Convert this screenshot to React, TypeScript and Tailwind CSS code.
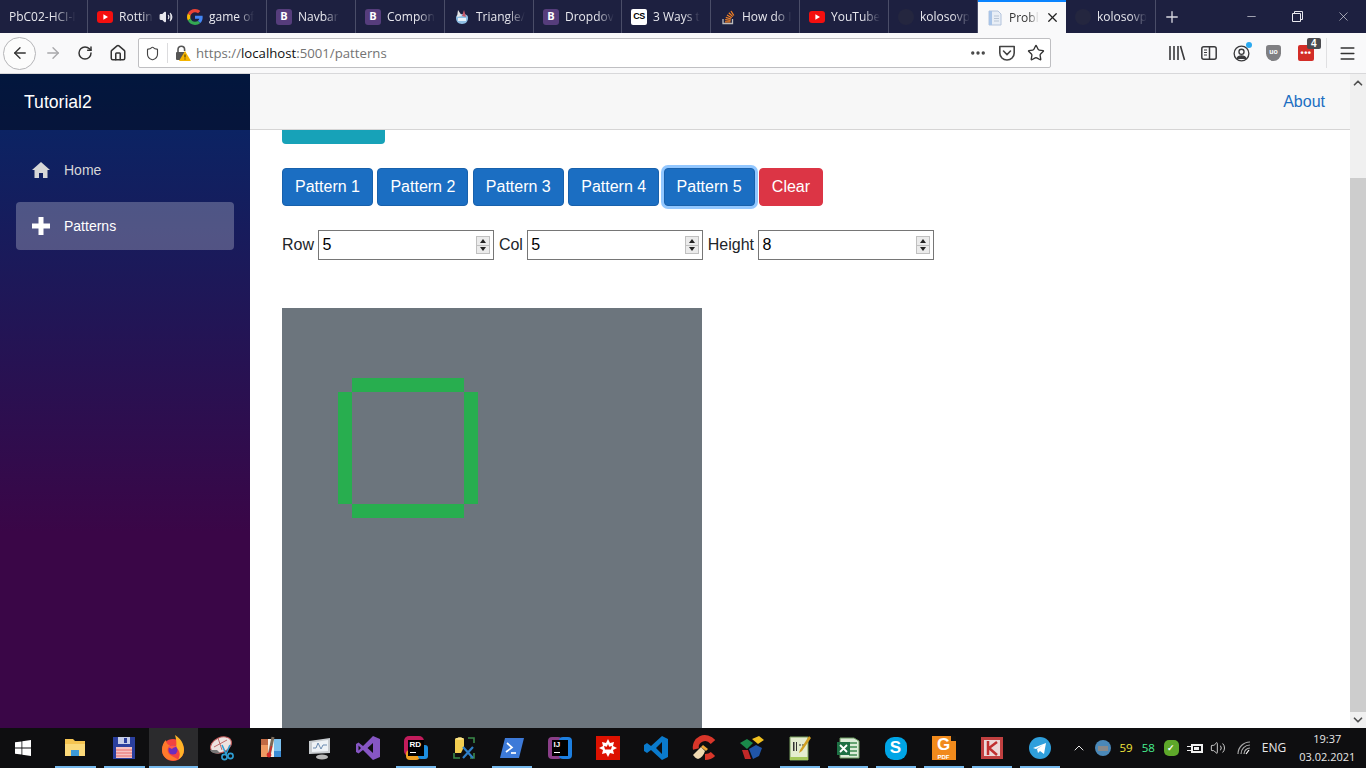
import type { ReactNode } from "react";
import { ArrowLeft, ArrowRight, ChevronUp, Ellipsis, Home, Menu, Minus, Plus, RotateCw, Shield, Star, Volume2, X } from "lucide-react";

// --- tab icons ---
const YouTubeIcon = () => (
  <svg width="16" height="16" viewBox="0 0 16 16">
    <rect x="0" y="2" width="16" height="12" rx="3" fill="#f40f0f" />
    <path d="M6.400 5.200 11 8l-4.600 2.800z" fill="#fff" />
  </svg>
);

const GoogleIcon = () => (
  <svg width="16" height="16" viewBox="0 0 48 48">
    <path fill="#ea4335" d="M24 9.500c3.500 0 6.700 1.200 9.200 3.600l6.900-6.900C35.900 2.400 30.500 0 24 0 14.600 0 6.500 5.400 2.600 13.200l8 6.200C12.500 13.600 17.800 9.500 24 9.500z" />
    <path fill="#4285f4" d="M47 24.500c0-1.600-.1-3.100-.4-4.500H24v9h13c-.6 3-2.200 5.500-4.800 7.200l7.700 6C44.400 38 47 31.800 47 24.500z" />
    <path fill="#fbbc05" d="M10.600 28.600C10.100 27.200 9.800 25.600 9.800 24s.3-3.200.8-4.600l-8-6.200C.9 16.500 0 20.100 0 24s.9 7.500 2.600 10.800z" />
    <path fill="#34a853" d="M24 48c6.500 0 11.900-2.100 15.900-5.800l-7.700-6c-2.100 1.500-4.900 2.300-8.200 2.300-6.200 0-11.500-4.100-13.400-9.900l-8 6.200C6.500 42.600 14.600 48 24 48z" />
  </svg>
);

const BootstrapIcon = () => (
  <span className="flex h-4 w-4 items-center justify-center rounded-[3px] bg-[#563d7c] text-[11px] font-bold text-white">B</span>
);

const TriangleIcon = () => (
  <svg width="16" height="16" viewBox="0 0 16 16">
    <path d="M2 9c0-3 2-4 6-4s6 1 6 4-2 6-6 6-6-3-6-6z" fill="#8fbfe4" />
    <path d="M4 1 8 7 3 8z" fill="#e4e4e4" />
    <path d="M10 1 8 7l4 1z" fill="#c85a6a" />
    <path d="M4 9h8v3H4z" fill="#e8f2fa" />
  </svg>
);

const CsIcon = () => (
  <span className="flex h-4 w-4 items-center justify-center rounded-[2px] bg-white font-['Liberation_Sans',sans-serif] text-[9px] font-bold tracking-[-0.5px] text-black">CS</span>
);

const StackIcon = () => (
  <svg width="16" height="16" viewBox="0 0 16 16" fill="none">
    <path d="M3 10v4.500h9.500V10" stroke="#bcbbbb" strokeWidth="1.300" />
    <path d="M5 12.800h5.500M5.200 10.700l5.400.7M5.800 8.300l5.200 1.700M7 6l4.700 2.800M8.800 3.800l4 3.800M11 2l2.800 4.500" stroke="#f48024" strokeWidth="1.300" />
  </svg>
);

const GithubDim = () => <span className="h-4 w-4 rounded-full bg-[#24263f]" />;

const DocIcon = () => (
  <svg width="16" height="16" viewBox="0 0 16 16">
    <path d="M2 1h9l3 3v11H2z" fill="#e8eef6" stroke="#b4c4dc" />
    <path d="M2 1h3v14H2z" fill="#a8c4e8" />
    <path d="M7 6h5M7 8.500h5M7 11h5" stroke="#b8c4d4" />
  </svg>
);

const tabs: { title: string; icon?: ReactNode; w: number; active?: boolean; sound?: boolean }[] = [
  { title: "PbC02-HCI-I", w: 88 },
  { title: "Rottin", icon: <YouTubeIcon />, w: 90, sound: true },
  { title: "game of", icon: <GoogleIcon />, w: 89 },
  { title: "Navbar", icon: <BootstrapIcon />, w: 89 },
  { title: "Compon", icon: <BootstrapIcon />, w: 89 },
  { title: "Triangle/", icon: <TriangleIcon />, w: 89 },
  { title: "Dropdov", icon: <BootstrapIcon />, w: 88 },
  { title: "3 Ways t", icon: <CsIcon />, w: 89 },
  { title: "How do I", icon: <StackIcon />, w: 89 },
  { title: "YouTube", icon: <YouTubeIcon />, w: 89 },
  { title: "kolosovp", icon: <GithubDim />, w: 89 },
  { title: "Probl", icon: <DocIcon />, w: 88, active: true },
  { title: "kolosovp", icon: <GithubDim />, w: 90 },
];

function Tab({ tab }: { tab: (typeof tabs)[number] }) {
  return (
    <div
      style={{ width: tab.w }}
      className={
        tab.active
          ? "flex h-[33px] shrink-0 items-center gap-[6px] border-t-2 border-[#0a84ff] bg-[#f9f9fa] pl-[9px] pr-[9px] text-[#333]"
          : "flex h-[33px] shrink-0 items-center gap-[6px] border-r border-[#4a4d68] pl-[9px] pr-[8px] text-[#e8e8ee]"
      }
    >
      {tab.icon && <span className="flex w-4 shrink-0 items-center justify-center">{tab.icon}</span>}
      <span className="whitespace-nowrap [mask-image:linear-gradient(to_right,black_65%,transparent)]">{tab.title}</span>
      {tab.sound && <Volume2 size={14} className="ml-auto mr-[2px] shrink-0 text-[#e8e8ee]" fill="currentColor" />}
      {tab.active && <X size={15} strokeWidth={2} className="ml-auto shrink-0 text-[#222]" />}
    </div>
  );
}

function TabBar() {
  return (
    <div className="flex h-[33px] shrink-0 items-center bg-[#1d2040] font-['Open_Sans',sans-serif] text-[12px]">
      {tabs.map((t, i) => (
        <Tab key={i} tab={t} />
      ))}
      <Plus size={18} strokeWidth={1.800} className="ml-[7px] text-[#d8d8e0]" />
      <div className="ml-auto flex h-full items-center text-[#e8e8ee]">
        <span className="flex w-[46px] justify-center"><Minus size={13} strokeWidth={1.200} /></span>
        <span className="flex w-[46px] justify-center">
          <svg width="11" height="11" viewBox="0 0 11 11" fill="none" stroke="currentColor"><path d="M.5 2.500h8v8h-8zM2.500 2.500v-2h8v8h-2" /></svg>
        </span>
        <span className="flex w-[46px] justify-center"><X size={15} strokeWidth={1} /></span>
      </div>
    </div>
  );
}

// --- toolbar ---
const LibraryIcon = () => (
  <svg width="18" height="16" viewBox="0 0 18 16" fill="none" stroke="#3a3a3c" strokeWidth="1.600">
    <path d="M2 1v14M6 1v14M10 1v14M12.500 1l4 14" />
  </svg>
);

const SidebarIcon = () => (
  <svg width="16" height="14" viewBox="0 0 16 14" fill="none" stroke="#3a3a3c" strokeWidth="1.500">
    <rect x=".8" y=".8" width="14.400" height="12.400" rx="2" />
    <path d="M8.500 1v12" />
    <path d="M3 4h3M3 6.500h3M3 9h3" strokeWidth="1.100" />
  </svg>
);

const PocketIcon = () => (
  <svg width="18" height="16" viewBox="0 0 18 16" fill="none" stroke="#444" strokeWidth="1.600">
    <path d="M1.800 1.500h14.400v6.500a7.200 7 0 0 1-14.400 0z" strokeLinejoin="round" />
    <path d="M5.500 6 9 9.500 12.500 6" strokeLinecap="round" />
  </svg>
);

const LockWarnIcon = () => (
  <svg width="16" height="18" viewBox="0 0 16 18">
    <path d="M3 9V5.500a3.300 3.300 0 0 1 6.600 0V7" fill="none" stroke="#555" strokeWidth="1.600" />
    <rect x="1" y="8" width="10" height="8" rx="1" fill="#555" />
    <path d="M10 7 16 17H4z" fill="#f5b400" />
    <path d="M10 10.500v3M10 14.500v1" stroke="#3a2a00" strokeWidth="1" />
  </svg>
);

const AccountIcon = () => (
  <span className="relative flex">
    <svg width="17" height="17" viewBox="0 0 18 18" fill="none" stroke="#3a3a3c" strokeWidth="1.400">
      <circle cx="9" cy="9" r="7.800" />
      <circle cx="9" cy="7.200" r="2.700" />
      <path d="M4.500 14c1.200-3.200 7.800-3.200 9 0z" fill="#3a3a3c" />
    </svg>
    <span className="absolute right-[-2px] top-[-3px] h-[6px] w-[6px] rounded-full bg-[#2aa9f0]" />
  </span>
);

const UblockIcon = () => (
  <span className="flex h-[16px] w-[15px] items-center justify-center rounded-b-[8px] rounded-t-[3px] bg-[#808083] pb-[2px] text-[7px] font-bold text-white">uo</span>
);

const LastPassIcon = () => (
  <span className="relative flex h-[16px] w-[16px] items-center justify-center rounded-[2px] bg-[#d32d27] text-[9px] leading-none font-bold tracking-[0.5px] text-white">
    •••
    <span className="absolute right-[-7px] top-[-7px] flex h-[11px] w-[14px] items-center justify-center rounded-[2px] bg-[#4a4a4f] font-['Liberation_Sans',sans-serif] text-[10px] text-white">4</span>
  </span>
);

function Toolbar() {
  return (
    <div className="flex h-[41px] shrink-0 items-center border-b border-[#d8d8da] bg-[#f9f9fa] pl-[3px]">
      <span className="flex h-[33px] w-[33px] items-center justify-center rounded-full border border-[#b5b5b8] bg-[#fcfcfc]">
        <ArrowLeft size={18} strokeWidth={1.800} className="text-[#333]" />
      </span>
      <ArrowRight size={18} strokeWidth={1.800} className="ml-[8px] text-[#a8a8aa]" />
      <RotateCw size={16} strokeWidth={2.200} className="ml-[15px] text-[#333]" />
      <Home size={18} strokeWidth={2} className="ml-[16px] text-[#333]" />
      <div className="ml-[11px] flex h-[30px] w-[913px] items-center rounded-[2px] border border-[#bfbfc2] bg-white">
        <Shield size={15} strokeWidth={1.800} className="ml-[6px] text-[#444]" />
        <span className="ml-[7px] h-[20px] w-px bg-[#dcdcde]" />
        <span className="ml-[7px] flex"><LockWarnIcon /></span>
        <span className="ml-[5px] pt-[1px] font-['Open_Sans',sans-serif] text-[13.200px] text-[#737373]">
          https://<span className="text-[#111]">localhost</span>:5001/patterns
        </span>
        <div className="ml-auto flex items-center gap-[11px] pr-[5px]">
          <Ellipsis size={18} className="text-[#444]" strokeWidth={2.500} />
          <PocketIcon />
          <Star size={18} strokeWidth={1.800} className="text-[#333]" />
        </div>
      </div>
      <div className="ml-auto flex items-center">
        <LibraryIcon />
        <span className="ml-[15px] flex"><SidebarIcon /></span>
        <span className="ml-[16px] flex"><AccountIcon /></span>
        <span className="ml-[16px] flex"><UblockIcon /></span>
        <span className="ml-[17px] flex"><LastPassIcon /></span>
        <span className="ml-[12px] h-[30px] w-px bg-[#e0e0e2]" />
        <Menu size={19} strokeWidth={1.800} className="ml-[11px] mr-[9px] text-[#333]" />
      </div>
    </div>
  );
}

// --- blazor sidebar ---
function Sidebar() {
  return (
    <aside className="flex w-[250px] shrink-0 flex-col bg-[linear-gradient(180deg,#052767_0%,#3a0647_70%)]">
      <div className="flex h-[56px] items-center bg-black/40 pl-[24px] text-[17.600px] text-white">Tutorial2</div>
      <nav className="flex flex-col gap-[8px] px-[16px] pt-[16px] text-[14px]">
        <a className="flex h-[48px] items-center rounded-[4px] pl-[16px] text-[#d7d7d7]">
          <svg width="18" height="16" viewBox="0 0 18 16" fill="#d7d7d7" className="mr-[14px]">
            <path d="M9 0 0 8h2.500v8h4.500v-5h4v5h4.500V8H18z" />
          </svg>
          Home
        </a>
        <a className="flex h-[48px] items-center rounded-[4px] bg-white/25 pl-[16px] text-white">
          <svg width="18" height="18" viewBox="0 0 18 18" fill="#fff" className="mr-[14px]">
            <path d="M6.500 0h5v6.500H18v5h-6.500V18h-5v-6.500H0v-5h6.500z" />
          </svg>
          Patterns
        </a>
      </nav>
    </aside>
  );
}

// --- page content ---
const patternButtons = ["Pattern 1", "Pattern 2", "Pattern 3", "Pattern 4", "Pattern 5"];

function isLit(r: number, c: number) {
  if ((r === 5 || r === 14) && c >= 5 && c <= 12) return true;
  if ((c === 4 || c === 13) && r >= 6 && r <= 13) return true;
  return false;
}

function NumberField({ label, value }: { label: string; value: number }) {
  return (
    <>
      <span className="mr-[4.450px]">{label}</span>
      <span className="relative mr-[4.450px] flex h-[30px] w-[176px]">
        <input
          readOnly
          value={value}
          className="h-full w-full border border-[#767676] bg-white pl-[3px] text-[16px] text-black outline-none"
        />
        <span className="absolute right-[4px] top-[6px] flex h-[18px] w-[14px] flex-col border border-[#c0c0c0] bg-[#ebebeb]">
          <span className="flex flex-1 items-center justify-center border-b border-[#c0c0c0]">
            <span className="h-0 w-0 border-x-[3px] border-b-[4px] border-x-transparent border-b-[#222]" />
          </span>
          <span className="flex flex-1 items-center justify-center">
            <span className="h-0 w-0 border-x-[3px] border-t-[4px] border-x-transparent border-t-[#222]" />
          </span>
        </span>
      </span>
    </>
  );
}

function Content() {
  const rows = Array.from({ length: 30 }, (_, i) => i);
  return (
    <main className="min-w-0 flex-1 overflow-hidden bg-white pl-[32px] text-[#212529]">
      <div className="h-[14px] w-[103px] rounded-b-[4px] bg-[#17a2b8]" />
      <div className="mt-[24px] flex gap-[4.400px]">
        {patternButtons.map((b, i) => (
          <button
            key={b}
            className={
              i === 4
                ? "h-[38px] w-[91px] rounded-[4px] border border-[#1861ac] bg-[#1b6ec2] text-[16px] text-white shadow-[0_0_0_3px_rgba(38,143,255,0.5)]"
                : "h-[38px] w-[91px] rounded-[4px] border border-[#1861ac] bg-[#1b6ec2] text-[16px] text-white"
            }
          >
            {b}
          </button>
        ))}
        <button className="h-[38px] w-[64px] rounded-[4px] border border-[#dc3545] bg-[#dc3545] text-[16px] text-white">Clear</button>
      </div>
      <div className="mt-[24px] flex h-[30px] items-center text-[16px]">
        <NumberField label="Row" value={5} />
        <NumberField label="Col" value={5} />
        <NumberField label="Height" value={8} />
      </div>
      <div className="mt-[48px] grid w-[420px] grid-cols-[repeat(30,14px)] auto-rows-[14px] bg-[#6c757d]">
        {rows.map((r) => rows.map((c) => <div key={`${r}-${c}`} className={isLit(r, c) ? "bg-[#28ae4f]" : ""} />))}
      </div>
    </main>
  );
}

function Scrollbar() {
  return (
    <div className="flex w-[16px] shrink-0 flex-col items-center bg-[#f0f0f0]">
      <ChevronUp size={14} strokeWidth={3} className="mt-[1px] h-[16px] text-[#505050]" />
      <div className="mt-[87px] w-full flex-1 bg-[#cdcdcd]" />
      <ChevronUp size={14} strokeWidth={3} className="h-[16px] rotate-180 text-[#505050]" />
    </div>
  );
}

// --- windows taskbar ---
const taskIcons: { icon: ReactNode; line?: boolean; active?: boolean }[] = [
  {
    line: true,
    icon: (
      <svg width="22" height="20" viewBox="0 0 22 20">
        <path d="M1 1h8l2 2h10v15H1z" fill="#f5c451" />
        <path d="M1 6h20v12H1z" fill="#fbd97a" />
        <path d="M7 12h8v6H7z" fill="#3c9ad8" />
      </svg>
    ),
  },
  {
    line: true,
    icon: (
      <svg width="24" height="24" viewBox="0 0 24 24">
        <path d="M1 1h22v22H1z" fill="#2b3f9e" />
        <path d="M6 1h12v7H6z" fill="#c6cde8" />
        <path d="M12 2h3v5h-3z" fill="#2b3f9e" />
        <path d="M4 11h16v11H4z" fill="#f6c2c2" />
        <path d="M4 14h16M4 17h16M4 20h16" stroke="#e86a6a" />
      </svg>
    ),
  },
  {
    line: true,
    active: true,
    icon: (
      <svg width="24" height="26" viewBox="0 0 24 26">
        <circle cx="12" cy="15" r="11" fill="#f2433f" />
        <path d="M14 0c5 3 9 8 9 15a11 11 0 0 1-6 9.500c3-4 2-9-2-12 1-4 0-9-1-12.500z" fill="#ffb327" />
        <path d="M1 15c0-4 1.500-8 4-10 0 3 1.500 4.500 4 5.500-3 2-3 6-1 8.500 2 2 5 3 9 5.500-7 3-16-1-16-9.500z" fill="#ff7a2b" />
        <circle cx="12" cy="15" r="4.500" fill="#6b2dbd" />
        <path d="M7 12c3-2 7-2 9 0-2 0-4 .5-5 2z" fill="#ff5a4a" />
      </svg>
    ),
  },
  {
    icon: (
      <svg width="26" height="26" viewBox="0 0 26 26">
        <ellipse cx="12" cy="10" rx="11" ry="7.500" transform="rotate(-25 12 10)" fill="#ede2e0" stroke="#c05a5a" />
        <path d="M5 12 18 5M9 3l4 12" stroke="#c06a6a" />
        <path d="M1 15c2 4 7 4 10 3l-3-3z" fill="#777" />
        <path d="m13 10 4 9m4-9-4 9" stroke="#2f9fd4" strokeWidth="1.600" fill="none" />
        <circle cx="15.500" cy="22" r="2.600" fill="none" stroke="#2f9fd4" strokeWidth="1.600" />
        <circle cx="21.500" cy="21" r="2.600" fill="none" stroke="#2f9fd4" strokeWidth="1.600" />
      </svg>
    ),
  },
  {
    icon: (
      <svg width="20" height="24" viewBox="0 0 20 24">
        <path d="M0 3h8v18H0z" fill="#ee9a62" />
        <path d="M0 3h8v6H0z" fill="#c06a44" />
        <path d="M12 3h8v18h-8z" fill="#7cc0ee" />
        <path d="M12 15h8v6h-8z" fill="#3c8cd4" />
        <path d="M7 3h6v18H7z" fill="#f6f0e8" />
        <path d="m8 20 4-19" stroke="#7a6a5a" strokeWidth="3" />
        <path d="m8.500 18 2-8" stroke="#d02828" strokeWidth="1.500" />
        <circle cx="8" cy="19" r="2.400" fill="#d02828" />
      </svg>
    ),
  },
  {
    icon: (
      <svg width="24" height="24" viewBox="0 0 24 24">
        <path d="M1 5 22 2v15L1 18z" fill="#c8ccd0" />
        <path d="M4 6.500 20 4v11L4 16z" fill="#eef2f6" />
        <path d="M5 12h3l2-5 3 6 2-4h4" stroke="#6a8ab0" fill="none" />
        <ellipse cx="14" cy="21" rx="6" ry="2.500" fill="#b8b8b8" />
      </svg>
    ),
  },
  {
    icon: (
      <svg width="24" height="26" viewBox="0 0 24 26">
        <path d="M17 1l7 3v18l-7 3L7 15l-4.500 3.500L0 17V9l2.500-1.500L7 11zM17 8l-5.500 5 5.500 5zM2.500 10.500v5L5 13z" fill="#8656c4" />
      </svg>
    ),
  },
  {
    line: true,
    icon: (
      <span className="relative flex h-[24px] w-[24px] items-center justify-center">
        <span className="absolute left-0 top-0 h-[20px] w-[20px] rounded-[5px] bg-[#c21c5c]" />
        <span className="absolute bottom-0 left-[2px] h-[10px] w-[14px] rounded-[4px] bg-[#f0a020]" />
        <span className="absolute bottom-[1px] right-0 h-[14px] w-[10px] rounded-[3px] bg-[#1d8fe0]" />
        <span className="relative flex h-[16px] w-[16px] flex-col bg-black pl-[2px] font-['Liberation_Sans',sans-serif] text-[8px] font-bold leading-[9px] text-white">
          RD
          <span className="mt-[3px] h-px w-[6px] bg-white" />
        </span>
      </span>
    ),
  },
  {
    icon: (
      <svg width="24" height="24" viewBox="0 0 24 24" fill="none">
        <path d="M3 3c3-2 7-2 9 0v8l-3 6H3z" fill="#f2cd50" />
        <path d="M3 3c3-2 7-2 9 0-2 1-7 1-9 0z" fill="#fbe690" />
        <path d="M16 2h6v5M2 17v5h6M18 22h4v-5" stroke="#3b8a4a" strokeWidth="1.600" />
        <path d="m11 11 10 11m0-11L11 22" stroke="#2f7fc8" strokeWidth="2.200" />
      </svg>
    ),
  },
  {
    line: true,
    icon: (
      <svg width="24" height="22" viewBox="0 0 24 22">
        <path d="M5 1h19l-5 20H0z" fill="#3d7ad8" />
        <path d="m7 6 5 4.500L6 15" stroke="#fff" strokeWidth="1.700" fill="none" />
        <path d="M11 16h5" stroke="#fff" strokeWidth="1.700" />
      </svg>
    ),
  },
  {
    icon: (
      <span className="relative flex h-[24px] w-[24px] items-center justify-center">
        <span className="absolute left-0 top-[1px] h-[22px] w-[14px] rounded-[4px] bg-[#8a3f88]" />
        <span className="absolute right-0 top-[1px] h-[22px] w-[13px] rounded-[4px] bg-[#1d7fe0]" />
        <span className="relative flex h-[16px] w-[16px] flex-col bg-black pl-[2px] font-['Liberation_Sans',sans-serif] text-[8px] font-bold leading-[9px] text-white">
          IJ
          <span className="mt-[3px] h-px w-[6px] bg-white" />
        </span>
      </span>
    ),
  },
  {
    icon: (
      <svg width="24" height="24" viewBox="0 0 24 24">
        <path d="M0 0h24v24H0z" fill="#dd1100" />
        <path d="m12 3 2 4 4-1-1 4 4 2-4 2 1 4-4-1-2 4-2-4-4 1 1-4-4-2 4-2-1-4 4 1z" fill="#fff" />
        <path d="m12 8 1.200 2.800 2.800-.8-1 3.500h-6l-1-3.500 2.800.8z" fill="#dd1100" />
      </svg>
    ),
  },
  {
    icon: (
      <svg width="24" height="26" viewBox="0 0 24 26">
        <path d="M18 1l6 3v18l-6 3L7 15l-4 3-3-2v-6l3-2 4 3zM18 7l-6 6 6 6z" fill="#0a7acc" />
      </svg>
    ),
  },
  {
    icon: (
      <svg width="24" height="26" viewBox="0 0 24 26" fill="none">
        <path d="M21 7C18 3.500 13 2 9 4 5 6 3 10 4 14" stroke="#d8362a" strokeWidth="6" />
        <path d="M21 19c-2 2-5 3-8 3" stroke="#d8362a" strokeWidth="6" />
        <path d="M9 12 1 20c2 2 2 3 5 4 3-1 6-4 7-8z" fill="#eed8b0" />
        <path d="M9 12l5 4 2-2-5-4z" fill="#f0a838" />
      </svg>
    ),
  },
  {
    icon: (
      <svg width="26" height="26" viewBox="0 0 26 26">
        <path d="M1 8l7-4 6 4-6 6z" fill="#1a8a4a" />
        <path d="M13 4l7-3 5 4-6 4z" fill="#f0c020" />
        <path d="M3 15l6 0 3 9-6 0z" fill="#c02828" />
        <path d="M10 14l7-4 6 3-3 8-6 3z" fill="#2055a8" />
      </svg>
    ),
  },
  {
    line: true,
    icon: (
      <svg width="22" height="26" viewBox="0 0 22 26">
        <path d="M1 2h18v23H1z" fill="#e4edcf" stroke="#7aa060" />
        <path d="M1 22h18v3H1z" fill="#a4c85a" />
        <path d="M4 7h1.500v9H4zM7 7h1v9H7z" fill="#333" />
        <path d="M10 10h2M13 10h2" stroke="#333" />
        <path d="M20 1l2 2-9 13-3 2 1-3z" fill="#d0a020" />
      </svg>
    ),
  },
  {
    line: true,
    icon: (
      <svg width="24" height="24" viewBox="0 0 24 24">
        <path d="M4 2h14l5 3v17H4z" fill="#dcecd8" stroke="#6a9a60" />
        <path d="M13 7h8M13 11h8M13 15h8M13 19h8" stroke="#3f8a50" strokeWidth="1.600" />
        <path d="M1 6h13v13H1z" fill="#1d7044" />
        <path d="m4 9 7 7m0-7-7 7" stroke="#fff" strokeWidth="1.800" />
      </svg>
    ),
  },
  {
    line: true,
    icon: (
      <span className="flex h-[23px] w-[22px] items-center justify-center rounded-[9px] bg-[#00a5e6] font-['Liberation_Sans',sans-serif] text-[17px] font-bold text-white">S</span>
    ),
  },
  {
    line: true,
    icon: (
      <span className="relative flex h-[24px] w-[24px] flex-col items-center bg-[#f18a1c] font-['Liberation_Sans',sans-serif] font-bold text-white">
        <span className="text-[17px] leading-[18px]">G</span>
        <span className="text-[6px] leading-[6px]">PDF</span>
        <span className="absolute right-0 top-0 h-[5px] w-[5px] bg-[#111]" />
      </span>
    ),
  },
  {
    line: true,
    icon: (
      <svg width="22" height="24" viewBox="0 0 22 24">
        <path d="M0 1h22v22H0z" fill="#c04040" />
        <path d="M3 4h16v16H3z" fill="#ecd8d8" />
        <path d="m7 5 0 14m9-13-8 6 8 7" stroke="#c03030" strokeWidth="2.500" fill="none" />
      </svg>
    ),
  },
  {
    line: true,
    icon: (
      <svg width="22" height="22" viewBox="0 0 22 22">
        <circle cx="11" cy="11" r="11" fill="#2f9fdc" />
        <path d="m4 11 13-5-2 11-4-3-2 2-1-4 6-4-7 4z" fill="#fff" />
      </svg>
    ),
  },
];

function Taskbar() {
  return (
    <footer className="flex h-[40px] shrink-0 items-center bg-[#0e0e10] font-['Open_Sans',sans-serif] text-[#e8e8e8]">
      <span className="flex w-[50.500px] justify-center pr-[4px]">
        <svg width="16" height="16" viewBox="0 0 16 16" fill="#fff">
          <path d="M0 2.300 6.500 1.400v6.200H0zM7.300 1.300 16 0v7.600H7.300zM0 8.400h6.500v6.200L0 13.700zM7.300 8.400H16V16l-8.700-1.300z" />
        </svg>
      </span>
      {taskIcons.map((t, i) => (
        <span
          key={i}
          className={`relative flex h-[40px] shrink-0 items-center justify-center ${i < 5 ? "w-[49px]" : "w-[48px]"} ${t.active ? "bg-[#2b2b2d]" : ""}`}
        >
          {t.icon}
          {t.line && <span className={`absolute bottom-0 h-[2px] bg-[#76b9ed] ${t.active ? "inset-x-0" : "inset-x-[4px]"}`} />}
        </span>
      ))}
      <div className="flex h-full flex-1 items-center">
        <ChevronUp size={16} strokeWidth={1.500} className="ml-[7px] shrink-0" />
        <span className="ml-[8px] flex h-[16px] w-[16px] items-center justify-center rounded-full bg-[#4a88b8]">
          <span className="h-[5px] w-[10px] bg-[#8a8a8a]" />
        </span>
        <span className="ml-[9px] text-[11.500px] text-[#f0e63c]">59</span>
        <span className="ml-[9px] text-[11.500px] text-[#48f090]">58</span>
        <span className="ml-[9px] flex h-[16px] w-[15px] items-center justify-center rounded-[5px] bg-[#5ea82a] text-[9px] font-bold text-white">✓</span>
        <svg width="16" height="14" viewBox="0 0 16 14" className="ml-[8px]" fill="#f0f0f0">
          <path d="M4 3h12v9H4zM0 5h4v1H0zM0 9h4v1H0z" />
          <path d="M6 5h8v5H6z" fill="#0e0e10" />
          <path d="M7 6h5v3H7z" />
        </svg>
        <Volume2 size={16} strokeWidth={1.300} className="ml-[7px]" />
        <svg width="16" height="14" viewBox="0 0 16 14" className="ml-[11px]" fill="none" stroke="#a8a8a8" strokeWidth="1.200">
          <path d="M1 13A12 12 0 0 1 13 1M4 13a9 9 0 0 1 9-9M7 13a6 6 0 0 1 6-6" />
          <path d="m9 13 3-4" stroke="#fff" />
        </svg>
        <span className="ml-[9px] text-[12px]">ENG</span>
        <span className="ml-[13px] flex flex-col items-center text-[11px] leading-[18px]">
          <span>19:37</span>
          <span>03.02.2021</span>
        </span>
      </div>
    </footer>
  );
}

export default function App() {
  return (
    <div className="flex h-screen w-[1366px] flex-col overflow-hidden font-['Liberation_Sans',Arial,sans-serif]">
      <TabBar />
      <Toolbar />
      <div className="flex min-h-0 flex-1">
        <Sidebar />
        <div className="flex min-w-0 flex-1 flex-col">
          <header className="flex h-[56px] shrink-0 items-center justify-end border-b border-[#d6d5d5] bg-[#f7f7f7] pr-[25px] text-[16px]">
            <a className="text-[#1b6ec2]">About</a>
          </header>
          <Content />
        </div>
        <Scrollbar />
      </div>
      <Taskbar />
    </div>
  );
}
